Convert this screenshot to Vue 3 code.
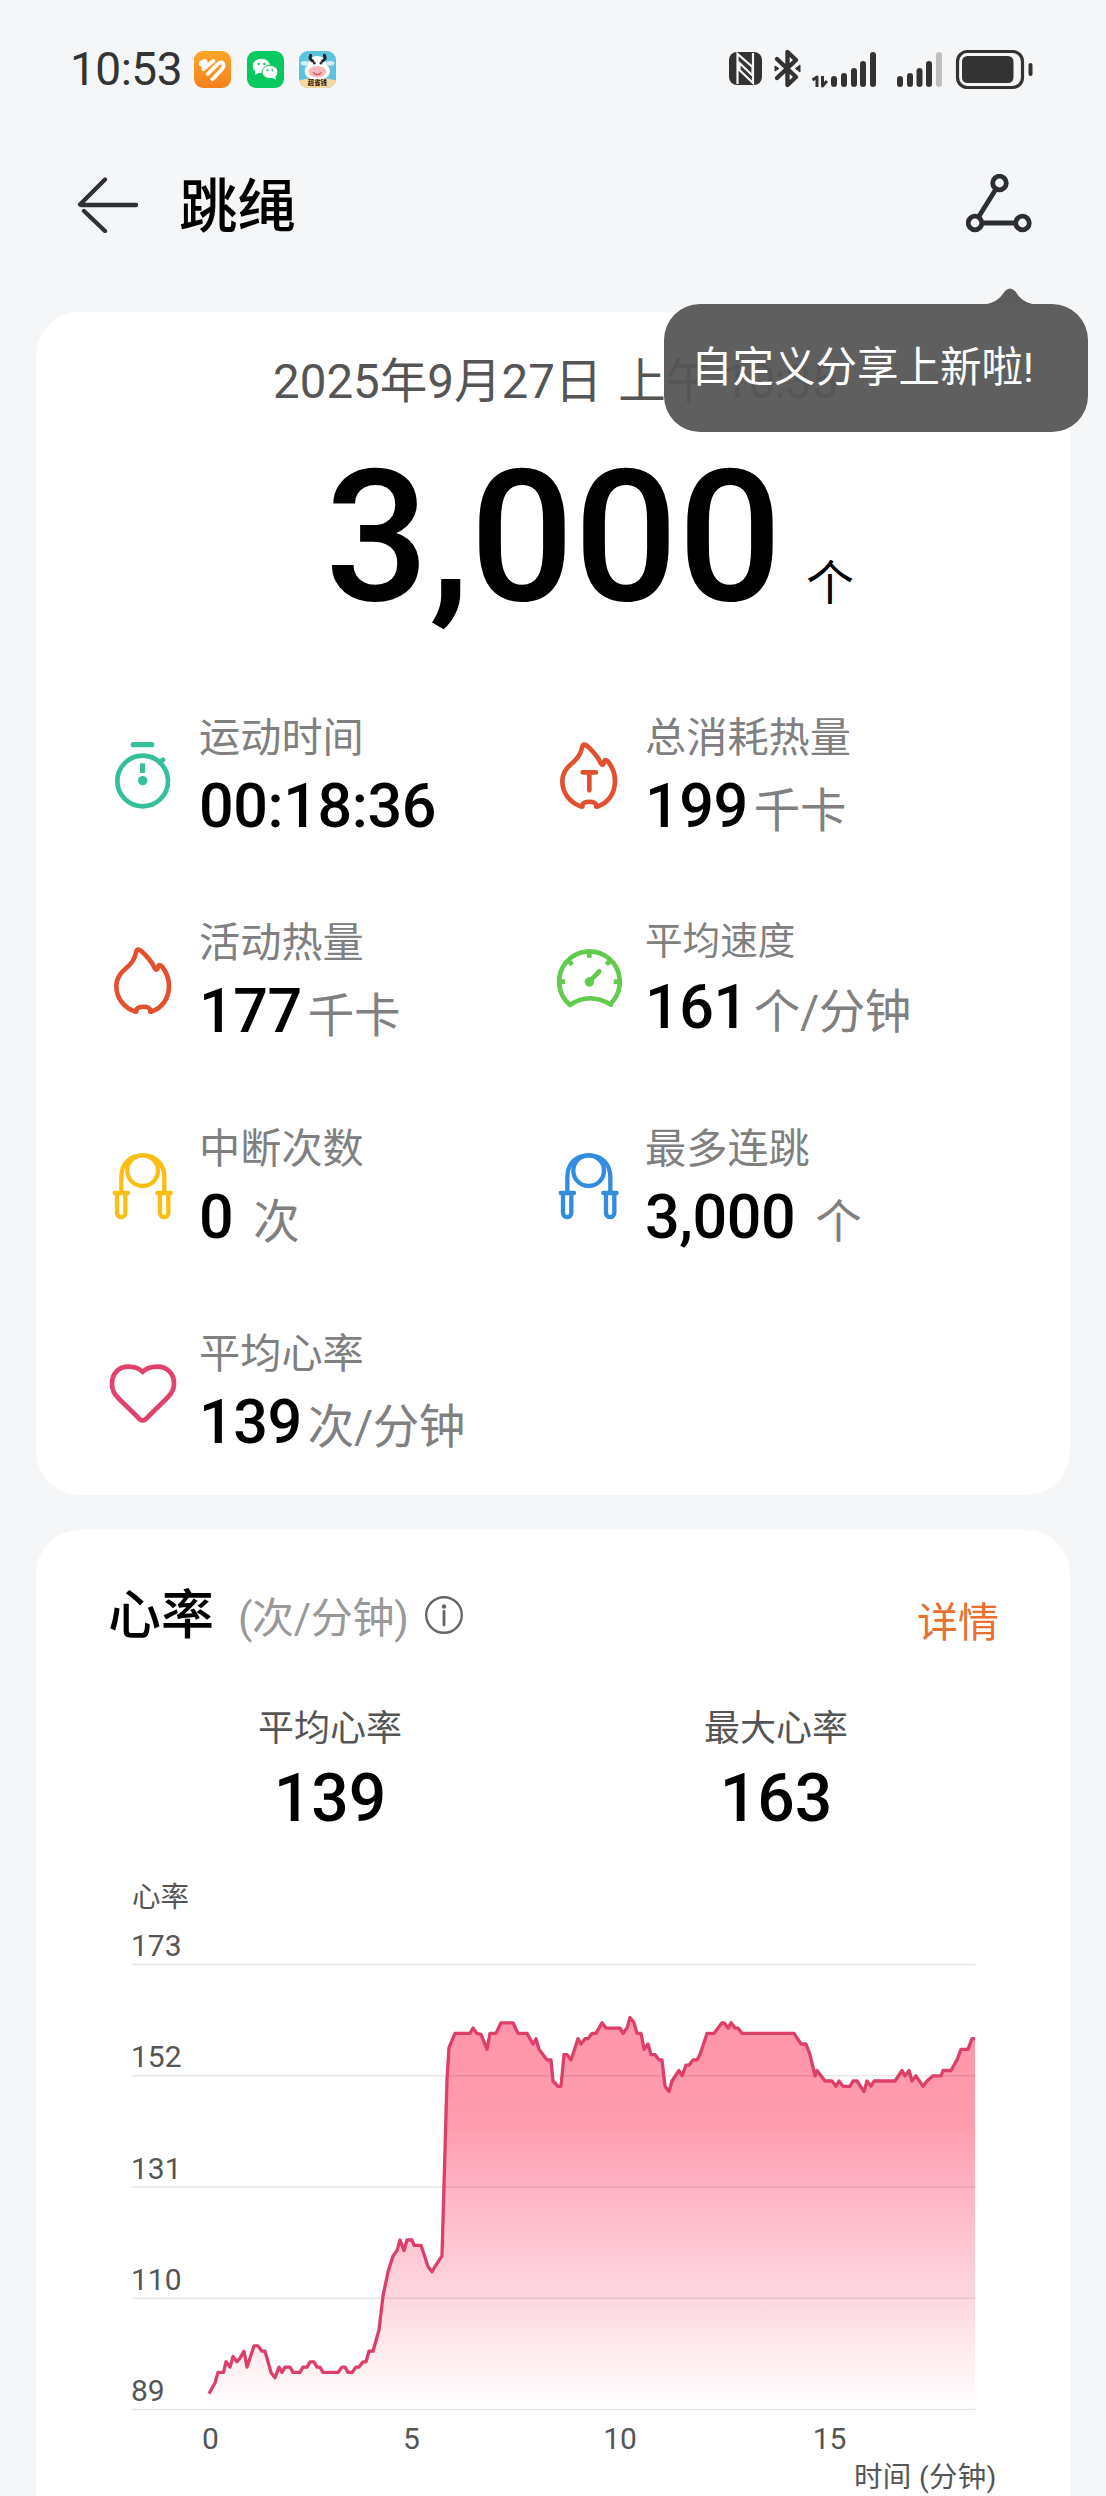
<template>
  <div class="page">
    <!-- 状态栏 -->
    <div class="status-bar">
      <span class="clock">10:53</span>
      <div class="apps">
        <svg class="app" viewBox="0 0 111 111">
          <defs>
            <linearGradient id="orange" x1="0" y1="0" x2="0" y2="1">
              <stop offset="0" stop-color="#ffa62b" />
              <stop offset="1" stop-color="#f5801c" />
            </linearGradient>
          </defs>
          <rect width="111" height="111" rx="27" fill="url(#orange)" />
          <g fill="none" stroke="#fff" stroke-linecap="round" stroke-linejoin="round">
            <path d="M24 38 L32 33" stroke-width="18" />
            <path d="M28 54 L58 30" stroke-width="12" />
            <path d="M41 69 L70 40 Q84 28 89 42 Q90 49 80 59 L55 85" stroke-width="11.500" />
          </g>
        </svg>
        <svg class="app" viewBox="0 0 111 111">
          <rect width="111" height="111" rx="27" fill="#07c95f" />
          <ellipse cx="43" cy="45" rx="26" ry="22" fill="#fff" />
          <path d="M26 58 L23 71 L38 65 Z" fill="#fff" />
          <ellipse cx="69" cy="63" rx="24" ry="20" fill="#fff" stroke="#07c95f" stroke-width="3" />
          <path d="M75 80 L87 86 L84 73 Z" fill="#fff" />
          <g fill="#07c95f">
            <circle cx="35" cy="39" r="3.5" />
            <circle cx="52" cy="39" r="3.5" />
            <circle cx="61" cy="58" r="3" />
            <circle cx="76" cy="58" r="3" />
          </g>
        </svg>
        <svg class="app" viewBox="0 0 111 111">
          <defs>
            <clipPath id="cow"><rect width="111" height="111" rx="27" /></clipPath>
          </defs>
          <g clip-path="url(#cow)">
            <rect width="111" height="111" fill="#5cc3dc" />
            <path d="M0 88 Q55 74 111 88 V111 H0 Z" fill="#f6d9a0" />
            <ellipse cx="17" cy="37" rx="12" ry="7" fill="#d5eef4" />
            <ellipse cx="94" cy="37" rx="12" ry="7" fill="#d5eef4" />
            <ellipse cx="55" cy="60" rx="38" ry="28" fill="#fff" />
            <ellipse cx="55" cy="40" rx="28" ry="25" fill="#fff" />
            <path d="M41 30 Q30 24 35 13 M71 30 Q82 24 76 13" fill="none" stroke="#222" stroke-width="9" stroke-linecap="round" />
            <ellipse cx="55" cy="62" rx="27" ry="17" fill="#f5b9b9" />
            <circle cx="46" cy="36" r="4.500" fill="#333" />
            <circle cx="66" cy="36" r="4.500" fill="#333" />
            <path d="M42 64 Q55 78 68 64" fill="none" stroke="#d0514f" stroke-width="4" />
            <text x="55" y="102" text-anchor="middle" class="cow-text">超省钱</text>
          </g>
        </svg>
      </div>

      <svg class="signals" viewBox="0 0 310 44" width="310" height="44">
        <!-- NFC -->
        <rect x="4" y="6" width="33" height="33" rx="8" fill="#333" />
        <path d="M12.500 38 V8 L27.500 21 V27 M28 7 V37 L14.500 24 V17 L28 30" fill="none" stroke="#f4f6f8" stroke-width="2.200" />
        <!-- 蓝牙 -->
        <path d="M52 13 L71 31 L62.500 39 V6 L71 14 L52 32" fill="none" stroke="#333" stroke-width="4.400" stroke-linejoin="round" stroke-linecap="round" />
        <path d="M50 20 L54 22.500 L50 25 Z M75 19 L70.500 22.500 L75 26 Z" fill="#333" stroke="#333" />
        <!-- 上下行 -->
        <path d="M87.500 34 L92 31 V41 M97.500 30 V40 L102 35" fill="none" stroke="#333" stroke-width="3" stroke-linejoin="round" />
        <rect
          v-for="(bar, i) in signalBars"
          :key="i"
          :x="bar.x - 3"
          :y="bar.top"
          width="6"
          :height="41 - bar.top"
          rx="3"
          :fill="bar.off ? '#bfbfc0' : '#333'"
        />
        <!-- 电池 -->
        <rect x="232.500" y="5.500" width="65" height="36" rx="10" fill="none" stroke="#333" stroke-width="3.200" />
        <rect x="237" y="10" width="51.500" height="27" rx="5.500" fill="#333" />
        <rect x="303.500" y="17" width="4" height="13" rx="2" fill="#333" />
      </svg>
    </div>

    <!-- 标题栏 -->
    <header class="nav">
      <svg class="back" viewBox="0 0 62 60" width="62" height="60">
        <path d="M60 32 H5 M29 6.500 L4 31.500 M8 38 L29 58" fill="none" stroke="#2f3033" stroke-width="4.300" stroke-linecap="round" />
      </svg>
      <h1>跳绳</h1>
      <div class="share">
        <svg viewBox="0 0 66 60" width="66" height="60">
          <g fill="none" stroke="#2c2d30" stroke-width="4.800">
            <circle cx="33.500" cy="9" r="6.800" />
            <circle cx="9" cy="49" r="6.800" />
            <circle cx="56.500" cy="49" r="6.800" />
            <path d="M30 15 L12.500 43 M16 49 H50" />
          </g>
        </svg>
        <div class="tooltip">
          <svg class="tooltip-arrow" viewBox="0 0 64 17" width="64" height="17">
            <path d="M0 17 C18 16 22 10 27 3 Q32 -2 37 3 C42 10 46 16 64 17 Z" fill="#5c5c5c" />
          </svg>
          自定义分享上新啦!
        </div>
      </div>
    </header>

    <!-- 运动概览 -->
    <section class="card summary">
      <div class="date">2025年9月27日 <span>上午 10:35</span></div>
      <div class="total">
        <span class="total-num">3,000</span>
        <span class="total-unit">个</span>
      </div>
      <div class="stats">
        <div v-for="item in stats" :key="item.label" class="stat" :class="{ compact: item.compact }">
          <svg class="stat-icon" viewBox="0 0 216 216" :stroke="item.color" :fill="item.color">
            <g v-if="item.icon === 'timer'">
              <circle cx="107" cy="120" r="76" fill="none" stroke-width="14" />
              <path d="M79 11 H134" stroke-width="16" stroke-linecap="round" />
              <path d="M106.500 67 V96" stroke-width="15" />
              <path d="M158 65 L168 56" stroke-width="14" stroke-linecap="round" />
              <circle cx="107" cy="119" r="14" stroke="none" />
            </g>
            <g v-else-if="item.icon === 'flame' || item.icon === 'flame-t'" fill="none" stroke-width="14" stroke-linejoin="round" stroke-linecap="round">
              <path :d="flamePath" />
              <path v-if="item.icon === 'flame-t'" d="M89 94 H129 M109 95 V148" />
            </g>
            <g v-else-if="item.icon === 'gauge'" fill="none" stroke-width="14" stroke-linejoin="round">
              <path d="M178 173 A91 91 0 1 0 51 183 Q109 143 174 182" stroke-linecap="round" />
              <path d="M109 23 V41 M46 50 L58 62 M172 50 L160 62 M20 113 H36 M198 113 H182" />
              <path d="M109 113 L139 82" stroke-linecap="round" />
              <circle cx="109" cy="114" r="14" :fill="item.color" stroke="none" />
            </g>
            <g v-else-if="item.icon === 'rope'" fill="none" stroke-width="13">
              <circle cx="107" cy="56" r="46" />
              <path d="M43 120 V76 C43 34 70 10 107 10 C144 10 172 34 172 76 V120" />
              <path d="M23 123 H63 M151 123 H191" stroke-linecap="round" />
              <path d="M30 125 V183 A12.500 12.500 0 0 0 55 183 V125 M159 125 V183 A12.500 12.500 0 0 0 184 183 V125" />
            </g>
            <path
              v-else
              d="M107 45 C96 33 82 29 64 29 C35 29 15 50 15 80 C15 96 20 108 30 119 C48 139 74 161 96 185 Q107 196 118 185 C140 161 166 139 184 119 C194 108 201 96 201 80 C201 50 181 29 150 29 C132 29 118 33 107 45 Z"
              fill="none"
              stroke-width="14"
              stroke-linejoin="round"
            />
          </svg>
          <div class="stat-text">
            <div class="stat-label">{{ item.label }}</div>
            <div class="stat-value">
              {{ item.value }}<span class="stat-unit" :class="{ spaced: item.spaced }">{{ item.unit }}</span>
            </div>
          </div>
        </div>
      </div>
    </section>

    <!-- 心率 -->
    <section class="card heart">
      <div class="heart-head">
        <h2>心率</h2>
        <span class="heart-unit">(次/分钟)</span>
        <svg class="info" viewBox="0 0 40 40" width="40" height="40">
          <circle cx="20" cy="20" r="17.800" fill="none" stroke="#666" stroke-width="2.400" />
          <circle cx="20" cy="11.500" r="2.200" fill="#666" />
          <path d="M20 16.500 V30" stroke="#666" stroke-width="2.800" stroke-linecap="round" />
        </svg>
        <span class="detail">详情</span>
      </div>
      <div class="heart-stats">
        <div>
          <div class="heart-label">平均心率</div>
          <div class="heart-value">139</div>
        </div>
        <div>
          <div class="heart-label">最大心率</div>
          <div class="heart-value">163</div>
        </div>
      </div>

      <svg class="chart" viewBox="0 0 880 622" width="880" height="622">
        <defs>
          <linearGradient id="area" gradientUnits="userSpaceOnUse" x1="0" :y1="toY(163)" x2="0" :y2="toY(89)">
            <stop offset="0" stop-color="#ff94a8" />
            <stop offset="0.270" stop-color="#ff9caf" />
            <stop offset="0.450" stop-color="#ffb5c7" />
            <stop offset="0.720" stop-color="#fdd8e0" />
            <stop offset="1" stop-color="#ffffff" />
          </linearGradient>
        </defs>
        <text x="0" y="33" class="axis-name">心率</text>
        <polygon :points="areaPoints" fill="url(#area)" />
        <g v-for="tick in yTicks" :key="tick">
          <rect x="0" :y="toY(tick) - 0.700" width="843.500" height="1.400" fill="#000" fill-opacity="0.100" />
          <text x="-1" :y="toY(tick) - 8.500" class="axis-text">{{ tick }}</text>
        </g>
        <polyline :points="linePoints" fill="none" stroke="#dc3f68" stroke-width="3.300" stroke-linejoin="round" />
        <text v-for="tick in xTicks" :key="tick.label" :x="tick.x" y="574.500" text-anchor="middle" class="axis-text">{{ tick.label }}</text>
        <text x="722" y="613" class="axis-name time-name">时间 (分钟)</text>
      </svg>
    </section>
  </div>
</template>

<script setup>
import { computed } from 'vue'

defineOptions({
  name: 'JumpRopeDetail'
})

const signalBars = [
  { x: 109, top: 30 },
  { x: 119, top: 27 },
  { x: 129, top: 22 },
  { x: 138, top: 15 },
  { x: 148, top: 6 },
  { x: 175, top: 30 },
  { x: 185, top: 27 },
  { x: 194.5, top: 22 },
  { x: 204, top: 15 },
  { x: 214, top: 6, off: true }
]

const flamePath =
  'M94 11 C90 11 88 15 87 20 C83 40 74 53 58 66 C38 82 28 97 28 120 C28 156 50 186 86 197 C90 197 87 195 88 192 C92 179 126 179 130 192 C131 195 127 198 132 197 C164 188 186 158 186 120 C186 98 178 78 166 63 C162 57 156 56 154 60 C152 65 153 70 148 71 C142 70 140 58 134 50 C124 36 112 22 100 13 Q97 11 94 11 Z'

const stats = [
  { label: '运动时间', value: '00:18:36', unit: '', icon: 'timer', color: '#35c09b' },
  { label: '总消耗热量', value: '199', unit: '千卡', icon: 'flame-t', color: '#e2502f' },
  { label: '活动热量', value: '177', unit: '千卡', icon: 'flame', color: '#e2502f' },
  { label: '平均速度', value: '161', unit: '个/分钟', icon: 'gauge', color: '#62ca4c', compact: true },
  { label: '中断次数', value: '0', unit: '次', icon: 'rope', color: '#fbbe12', spaced: true },
  { label: '最多连跳', value: '3,000', unit: '个', icon: 'rope', color: '#328ce0', spaced: true },
  { label: '平均心率', value: '139', unit: '次/分钟', icon: 'heart', color: '#e2416c' }
]

const yTicks = [173, 152, 131, 110, 89]
const xTicks = [
  { label: '0', x: 78.5 },
  { label: '5', x: 279.5 },
  { label: '10', x: 488 },
  { label: '15', x: 697.5 }
]

// [横坐标, 心率]
const points = [
  [77, 92], [83, 94], [86, 96], [91.5, 96], [94, 98], [98, 97], [101, 99], [105, 98], [108, 98.7], [112, 100],
  [115, 97], [122, 101], [126, 101], [130, 100], [133, 100], [139, 96], [143, 95], [147, 97], [150, 96], [153, 97],
  [158, 97], [161, 96], [168, 96], [171, 97], [175, 97], [178, 98], [182, 98], [185, 97], [188, 97], [191, 96],
  [206, 96], [210, 97], [213, 97], [216, 96], [220, 96], [224, 97], [227, 97], [231, 98], [234, 98], [237, 100],
  [241, 100], [247, 104], [251, 110.4], [256, 115], [261, 118], [265, 119], [268, 121], [272, 119], [275, 121],
  [280, 121], [282, 120], [289, 120], [296, 116], [300, 115], [303, 116], [310, 118], [312, 131.4], [315, 151.3],
  [317, 157.3], [323, 160], [338, 160], [341, 161], [345, 160], [349, 159.8], [355, 157], [358, 160], [364, 160],
  [369, 162], [381, 162], [386, 160], [395, 160], [401, 158], [404, 159], [407, 157], [415, 155], [419, 155],
  [421, 151], [426, 150], [429, 150], [432, 156], [435, 156], [439, 155], [446, 159], [449, 158], [453, 159],
  [456, 159], [460, 160], [464, 160], [470, 162], [474, 161], [488, 161], [491, 160], [495, 161], [498, 163],
  [502, 162], [505, 160], [509, 160], [512, 157], [516, 158], [519, 156], [523, 156], [527, 155], [530, 155],
  [533, 150], [537, 149], [540, 151], [547, 153], [550, 152], [554, 154], [557, 154], [561, 155], [565, 155],
  [568, 156], [575, 160], [582, 160], [590, 162], [592, 162], [596, 161], [599, 162], [603, 161], [606, 161],
  [610, 160], [662, 160], [669, 158], [674, 158], [678, 156], [683, 152], [685, 153], [689, 152], [693, 151],
  [700, 151], [704, 150], [707, 151], [711, 150], [718, 150], [721, 151], [725, 151], [732, 149], [735, 151],
  [739, 150], [742, 151], [763, 151], [770, 153], [773, 152], [777, 153], [780, 151], [784, 152], [791, 150],
  [795, 151], [801, 152], [809, 152], [811, 153], [819, 153], [825, 155], [829, 157], [836, 157], [840, 159],
  [843, 159]
]

// 173 对应 y=90.5，89 对应 y=535.5
const toY = (bpm) => 90.5 + ((173 - bpm) * 445) / 84

const linePoints = computed(() => points.map(([x, bpm]) => `${x},${toY(bpm).toFixed(1)}`).join(' '))
const areaPoints = computed(() => `77,${toY(89)} ${linePoints.value} 843,${toY(89)}`)
</script>

<style>
body {
  background: #f4f6f8;
}
</style>

<style scoped>
.page {
  box-sizing: border-box;
  width: 1106px;
  height: 2496px;
  padding: 0 36px;
  overflow: hidden;
  background: #f4f6f8;
  font-family: Roboto, 'Noto Sans CJK SC', sans-serif;
  color: #000;
}

h1,
h2 {
  margin: 0;
  font-weight: 500;
}

/* 状态栏 */
.status-bar {
  display: flex;
  align-items: center;
  height: 138px;
  padding: 0 35px 0 34px;
}

.clock {
  width: 124px;
  font-size: 46px;
  line-height: 50px;
  letter-spacing: -0.5px;
  color: #333;
  white-space: nowrap;
}

.apps {
  display: flex;
  gap: 15.5px;
}

.app {
  display: block;
  width: 37px;
  height: 37px;
}

.cow-text {
  font-size: 19px;
  font-weight: 900;
  fill: #40220f;
}

.signals {
  margin-left: auto;
  margin-bottom: 2px;
}

/* 标题栏 */
.nav {
  display: flex;
  align-items: center;
  height: 134px;
  padding: 0 38px 0 40px;
}

.back {
  margin-bottom: 4px;
}

h1 {
  margin: 3px 0 0 41px;
  font-size: 58.5px;
  line-height: 70px;
}

.share {
  position: relative;
  height: 60px;
  margin: 0 0 2px auto;
}

.tooltip {
  position: absolute;
  z-index: 2;
  top: 130px;
  right: -56px;
  box-sizing: border-box;
  width: 424px;
  height: 128px;
  padding-left: 27px;
  border-radius: 36px;
  background: rgba(86, 86, 86, 0.95);
  color: #fff;
  font-size: 41.5px;
  line-height: 127px;
  white-space: nowrap;
}

.tooltip-arrow {
  position: absolute;
  top: -16px;
  right: 46px;
}

/* 卡片 */
.card {
  box-sizing: border-box;
  width: 1034px;
  border-radius: 44px;
  background: #fff;
}

.summary {
  height: 1183px;
  margin-top: 40px;
  padding: 40px 71px 0;
}

.date {
  font-size: 47.5px;
  line-height: 60px;
  padding-left: 166px;
  white-space: nowrap;
  color: #555;
}

.date span {
  margin-left: 4px;
  letter-spacing: -0.8px;
}

.total {
  display: flex;
  align-items: baseline;
  height: 190px;
  margin-top: 31px;
  padding-left: 218px;
}

.total-num {
  font-size: 183px;
  font-weight: 500;
  line-height: 190px;
}

.total-unit {
  margin-left: 24px;
  font-size: 48px;
}

.stats {
  display: grid;
  grid-template-columns: 446px 446px;
  grid-auto-rows: 205.3px;
  align-items: start;
  margin-top: 81px;
}

.stat {
  display: flex;
  align-items: center;
  gap: 20px;
}

.stat-icon {
  width: 72px;
  height: 72px;
  margin-bottom: 6px;
  overflow: visible;
}

.stat-label {
  font-size: 41.2px;
  line-height: 48px;
  color: #808080;
}

.compact .stat-label {
  font-size: 37.6px;
  line-height: 44px;
}

.stat-value {
  margin-top: 9px;
  font-size: 61px;
  font-weight: 500;
  line-height: 70px;
  letter-spacing: -0.4px;
  white-space: nowrap;
}

.stat-unit {
  margin-left: 6px;
  font-size: 46.5px;
  font-weight: 400;
  color: #808080;
}

.stat-unit.spaced {
  margin-left: 20px;
}

/* 心率 */
.heart {
  height: 1010px;
  margin-top: 35px;
  padding: 51px 71px 0;
}

.heart-head {
  display: flex;
  align-items: center;
  height: 70px;
}

h2 {
  margin-left: 1px;
  font-size: 53px;
  line-height: 70px;
}

.heart-unit {
  margin: 6px 0 0 24px;
  font-size: 42px;
  line-height: 60px;
  letter-spacing: -0.3px;
  color: #999;
}

.info {
  margin: 0 0 2px 15px;
}

.detail {
  margin: 14px 0 0 auto;
  font-size: 41px;
  line-height: 60px;
  color: #e9702f;
}

.heart-stats {
  display: grid;
  grid-template-columns: 446px 446px;
  margin-top: 52px;
  text-align: center;
}

.heart-label {
  font-size: 36px;
  line-height: 52px;
  color: #555;
}

.heart-value {
  margin-top: 6px;
  font-size: 66px;
  font-weight: 500;
  line-height: 76px;
}

.chart {
  display: block;
  margin: 37px 0 0 25px;
  overflow: visible;
}

.axis-name {
  font-size: 28.5px;
  fill: #555;
}

.time-name {
  letter-spacing: 0.3px;
}

.axis-text {
  font-size: 30px;
  fill: #555;
}
</style>
